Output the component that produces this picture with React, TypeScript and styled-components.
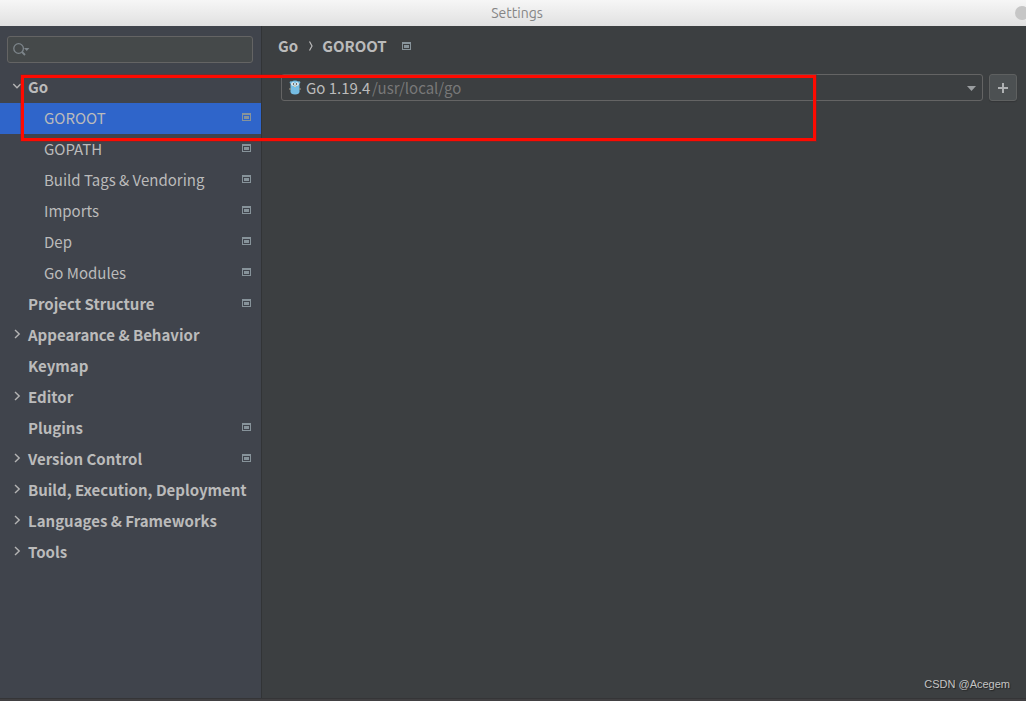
import React from 'react';
import styled, { createGlobalStyle } from 'styled-components';

const GlobalStyle = createGlobalStyle`
  * { box-sizing: border-box; }
  body {
    margin: 0;
    background: #3c3f41;
    color: #bbbbbb;
    font: 15px/24px "Noto Sans CJK SC", "Noto Sans", sans-serif;
  }
`;

const Window = styled.div`
  position: relative;
  display: flex;
  flex-direction: column;
  min-height: 100vh;
  overflow: hidden;
`;

const TitleBar = styled.header`
  display: grid;
  grid-template-columns: 1fr auto 1fr;
  align-items: center;
  height: 26px;
  padding-left: 8px;
  background: linear-gradient(#f6f6f6, #e1e1e1);
`;

const Title = styled.h1`
  grid-column: 2;
  margin: 0;
  color: #858585;
  font: 14px/20px Ubuntu, "Noto Sans", sans-serif;
`;

const WindowButton = styled.button`
  justify-self: end;
  width: 14px;
  height: 14px;
  margin-right: -3px;
  padding: 0;
  border: 0;
  border-radius: 50%;
  background: #c6c6c6;
`;

const Body = styled.div`
  display: flex;
  flex: 1;
`;

const Sidebar = styled.aside`
  flex: none;
  width: 262px;
  padding-top: 10px;
  border-right: 1px solid #323436;
  background: #40444c;
`;

const SearchBox = styled.label`
  display: flex;
  align-items: center;
  height: 27px;
  margin: 0 8px 9px 7px;
  padding-left: 5px;
  border: 1px solid #646464;
  border-radius: 3px;
  background: #45494a;
`;

const SearchInput = styled.input`
  flex: 1;
  min-width: 0;
  padding: 0 4px;
  border: 0;
  outline: 0;
  background: transparent;
  color: inherit;
  font: inherit;
`;

const Tree = styled.ul`
  margin: 0;
  padding: 0;
  list-style: none;
`;

const TreeRow = styled.button<{ $child?: boolean; $selected?: boolean }>`
  display: flex;
  align-items: center;
  width: 100%;
  height: 31px;
  padding: 0 10px 3px ${p => (p.$child ? 44 : 12)}px;
  border: 0;
  background: ${p => (p.$selected ? '#2f65ca' : 'transparent')};
  color: inherit;
  font: inherit;
  font-weight: ${p => (p.$child ? 400 : 700)};
  white-space: nowrap;
`;

const Arrow = styled.span`
  display: flex;
  flex: none;
  width: 16px;
`;

const RowLabel = styled.span`
  flex: 1;
  padding-top: 2px;
  text-align: left;
`;

const Main = styled.main`
  display: flex;
  flex: 1;
  flex-direction: column;
  min-width: 0;
  padding: 8px 9px 6px 16px;
`;

const Breadcrumb = styled.nav`
  display: flex;
  align-items: center;
  height: 24px;
  font-weight: 700;

  svg { margin: 0 8px 0 10px; }
  svg:last-child { margin-left: 15px; }
`;

const SdkRow = styled.div`
  display: flex;
  gap: 6px;
  margin: 16px 0 0 3px;
`;

const Combo = styled.div`
  display: grid;
  flex: 1;
  align-items: center;
  height: 27px;
  border: 1px solid #646464;
  border-radius: 3px;

  > * { grid-area: 1 / 1; }
  > svg, > span { pointer-events: none; }
`;

const ComboSelect = styled.select`
  width: 100%;
  height: 25px;
  padding: 0 24px;
  border: 0;
  outline: 0;
  appearance: none;
  background: transparent;
  color: inherit;
  font: inherit;
`;

const ComboPath = styled.span`
  padding-left: 90px;
  color: #787878;
`;

const ComboArrow = styled.svg`
  justify-self: end;
  margin: 1px 6px 0 0;
`;

const GopherIcon = styled.svg`
  margin: 0 0 1px 7px;
`;

const AddButton = styled.button`
  display: grid;
  place-items: center;
  width: 28px;
  height: 27px;
  padding: 0;
  border: 1px solid #5e6060;
  border-radius: 3px;
  background: #4c5052;
  box-shadow: 0 1px 1px #343638;
`;

const Watermark = styled.footer`
  margin-top: auto;
  padding-right: 7px;
  color: #c4c4c4;
  font: 11px/16px "Liberation Sans", Arial, sans-serif;
  text-align: right;
  text-shadow: 1px 1px 1px #222222;
`;

const BottomEdge = styled.div`
  height: 3px;
  border-top: 1px solid #353537;
  background: #414042;
`;

const Highlight = styled.div`
  position: absolute;
  top: 75px;
  left: 21px;
  width: 795px;
  height: 66px;
  border: 3px solid #ff0a00;
  box-shadow: 0 0 0 1px #9b1b1b66;
  pointer-events: none;
`;

const ProjectMark = () => (
  <svg width="9" height="8" viewBox="0 0 9 8" fill="#87939a" shapeRendering="crispEdges" aria-hidden="true">
    <path fillRule="evenodd" d="M0 0h9v8H0zM1 2v5h7V2z" />
    <path d="M2 3h5v3H2z" />
  </svg>
);

const Chevron = ({ open }: { open?: boolean }) => (
  <svg width="10" height="10" viewBox="0 0 10 10" fill="none" stroke="#b4b4b4" strokeWidth="1.4" aria-hidden="true">
    <path d={open ? 'M1.3 3 5 6.8 8.7 3' : 'M3 1 7.2 5 3 9'} />
  </svg>
);

type Item = { label: string; child?: boolean; arrow?: 'open' | 'closed'; mark?: boolean };

const items: Item[] = [
  { label: 'Go', arrow: 'open' },
  { label: 'GOROOT', child: true, mark: true },
  { label: 'GOPATH', child: true, mark: true },
  { label: 'Build Tags & Vendoring', child: true, mark: true },
  { label: 'Imports', child: true, mark: true },
  { label: 'Dep', child: true, mark: true },
  { label: 'Go Modules', child: true, mark: true },
  { label: 'Project Structure', mark: true },
  { label: 'Appearance & Behavior', arrow: 'closed' },
  { label: 'Keymap' },
  { label: 'Editor', arrow: 'closed' },
  { label: 'Plugins', mark: true },
  { label: 'Version Control', arrow: 'closed', mark: true },
  { label: 'Build, Execution, Deployment', arrow: 'closed' },
  { label: 'Languages & Frameworks', arrow: 'closed' },
  { label: 'Tools', arrow: 'closed' },
];

export default function App() {
  const [selected, setSelected] = React.useState('GOROOT');

  return (
    <Window>
      <GlobalStyle />
      <TitleBar>
        <Title>Settings</Title>
        <WindowButton aria-label="Close" />
      </TitleBar>
      <Body>
        <Sidebar>
          <SearchBox>
            <svg width="17" height="14" viewBox="0 0 17 14" fill="none" stroke="#7d858b" strokeWidth="1.3" aria-hidden="true">
              <circle cx="5.6" cy="5.5" r="4.8" />
              <path d="m9 9 3 3" strokeWidth="1.8" />
              <path d="M11 5h5.4L13.7 8z" fill="#7d858b" stroke="none" />
            </svg>
            <SearchInput type="text" aria-label="Search settings" />
          </SearchBox>
          <Tree>
            {items.map(item => (
              <li key={item.label}>
                <TreeRow
                  $child={item.child}
                  $selected={item.label === selected}
                  onClick={() => setSelected(item.label)}
                >
                  {!item.child && <Arrow>{item.arrow && <Chevron open={item.arrow === 'open'} />}</Arrow>}
                  <RowLabel>{item.label}</RowLabel>
                  {item.mark && <ProjectMark />}
                </TreeRow>
              </li>
            ))}
          </Tree>
        </Sidebar>
        <Main>
          <Breadcrumb aria-label="Breadcrumb">
            <span>Go</span>
            <svg width="6" height="10" viewBox="0 0 6 10" fill="none" stroke="#bbbbbb" strokeWidth="1.2" aria-hidden="true">
              <path d="M1.5.5 4 5 1.5 9.5" />
            </svg>
            <span>GOROOT</span>
            <ProjectMark />
          </Breadcrumb>
          <SdkRow>
            <Combo>
              <ComboSelect aria-label="GOROOT">
                <option>Go 1.19.4</option>
              </ComboSelect>
              <GopherIcon width="12" height="15" viewBox="0 0 12 15" aria-hidden="true">
                <circle cx="2" cy="2.5" r="1.3" fill="#6fb6dc" />
                <circle cx="10" cy="2.5" r="1.3" fill="#6fb6dc" />
                <path d="M1.5 5C1.5 2 3.2.5 6 .5S10.5 2 10.5 5v6.5c0 2-1.5 3-4.5 3s-4.5-1-4.5-3z" fill="#75bde4" />
                <path d="M1 8v2M11 8v2" stroke="#a9a08a" />
                <circle cx="4" cy="4" r="1.8" fill="#f4f4f4" />
                <circle cx="8" cy="4" r="1.8" fill="#f4f4f4" />
                <circle cx="4.4" cy="4" r=".7" fill="#222222" />
                <circle cx="7.6" cy="4" r=".7" fill="#222222" />
                <path d="M5 5.5h2V7H5z" fill="#d9cdb0" />
              </GopherIcon>
              <ComboPath>/usr/local/go</ComboPath>
              <ComboArrow width="9" height="5" viewBox="0 0 9 5" fill="#9a9da0" aria-hidden="true">
                <path d="M0 0h9L4.5 5z" />
              </ComboArrow>
            </Combo>
            <AddButton aria-label="Add SDK">
              <svg width="10" height="10" viewBox="0 0 10 10" fill="#afb1b3" aria-hidden="true">
                <path d="M4 0h2v4h4v2H6v4H4V6H0V4h4z" />
              </svg>
            </AddButton>
          </SdkRow>
          <Watermark>CSDN @Acegem</Watermark>
        </Main>
      </Body>
      <BottomEdge />
      <Highlight />
    </Window>
  );
}
